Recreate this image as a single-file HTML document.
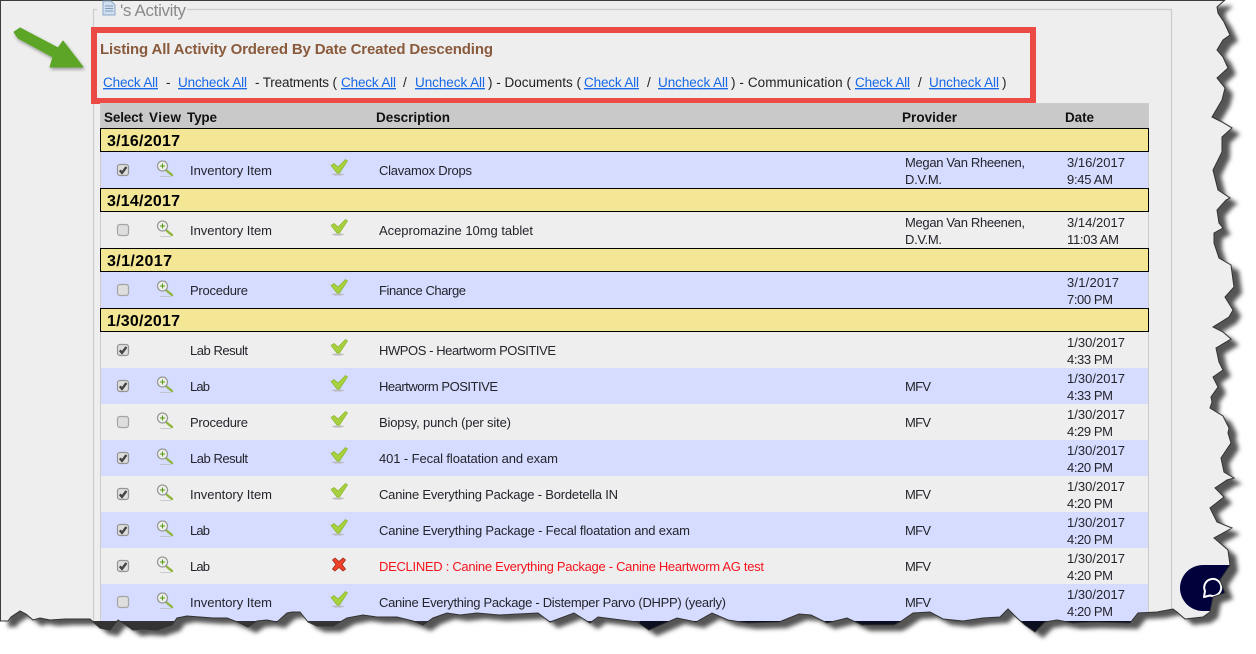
<!DOCTYPE html>
<html><head><meta charset="utf-8"><title>Activity</title>
<style>
html,body{margin:0;padding:0;background:#fff;width:1256px;height:654px;overflow:hidden}
svg{display:block;font-family:"Liberation Sans",sans-serif}
.t{font-size:13px;fill:#24242c}
.h{font-size:13.5px;font-weight:bold;fill:#111}
.d{font-size:16px;font-weight:bold;fill:#000}
.l{font-size:13.5px;fill:#1668e8;text-decoration:underline}
.k{font-size:13.5px;fill:#222}
</style></head><body>
<svg width="1256" height="654" viewBox="0 0 1256 654" xmlns="http://www.w3.org/2000/svg">
<defs>
<path id="edge" d="M0 0L1225 0L1217 7L1218 13L1224 22L1230 35L1223 40L1217 50L1223 57L1228 68L1217 78L1225 88L1222 100L1212 117L1222 122L1232 128L1222 137L1222 152L1213 170L1218 190L1230 198L1226 200L1217 210L1219 223L1223 228L1214 233L1214 243L1219 258L1231 265L1233 280L1234 287L1225 297L1233 310L1229 317L1213 327L1223 332L1231 339L1216 348L1219 362L1223 370L1213 377L1218 387L1211 397L1212 402L1210 408L1223 416L1229 428L1228 433L1231 443L1221 458L1224 472L1234 478L1227 480L1215 488L1224 497L1210 508L1217 522L1232 528L1214 538L1228 550L1230 565L1220 580L1225 593L1213 597L1210 612L1203 617L1185 619L1177 612L1173 609L1157 612L1138 613L1130 623L1093 622L1073 623L1057 620L1045 622L1035 632L1025 625L1017 618L1008 609L1000 617L983 618L963 621L943 619L930 612L913 613L900 622L894 625L862 625L847 618L827 623L811 615L799 614L779 622L748 623L728 620L712 613L696 622L677 618L649 630L637 622L598 617L590 623L574 613L550 622L538 613L499 615L477 613L460 615L447 613L433 618L423 625L413 621L397 617L377 617L363 615L347 618L333 626L317 626L308 622L300 612L292 612L287 613L277 622L267 620L257 621L248 627L240 623L227 618L213 618L200 617L187 616L177 618L172 625L157 630L143 629L133 630L123 623L118 620L110 630L100 628L90 619L65 619L50 620L40 618L33 620L26 614L20 611L11 617L8 621L0 621Z"/>
<clipPath id="pg"><use href="#edge"/></clipPath>
<filter id="bl" x="-5%" y="-5%" width="110%" height="110%"><feGaussianBlur stdDeviation="2.2"/></filter>
<filter id="as" x="-30%" y="-30%" width="160%" height="160%"><feDropShadow dx="1" dy="2" stdDeviation="1.5" flood-color="#000" flood-opacity=".35"/></filter>
<g id="cb0"><rect x="117.5" y="12.5" width="11" height="11" rx="2.500" fill="#dedede" stroke="#a5a5a5" stroke-width="1.200"/></g>
<g id="cb1"><rect x="117.5" y="12.5" width="11" height="11" rx="2.500" fill="#dedede" stroke="#959595" stroke-width="1.200"/><path d="M119.8 18.3L122 20.8L126.4 15" fill="none" stroke="#444" stroke-width="2.400"/></g>
<g id="mg"><path d="M160 24.500L171 24.500" stroke="#bbb" stroke-width="1" opacity=".7"/><path d="M166.500 18.500L172 23" stroke="#8fb53c" stroke-width="2.400" stroke-linecap="round"/><circle cx="162.500" cy="14" r="5" fill="#eef0ee" stroke="#999" stroke-width="1.300"/><path d="M160 14H165M162.500 11.500V16.500" stroke="#5a9a10" stroke-width="1.100"/></g>
<g id="ck"><ellipse cx="338" cy="22.500" rx="6" ry="1" fill="#bbb"/><path d="M331 13.500L334 11.500L338 15L345.500 7.500L347.500 9L339.500 21L337 21Z" fill="#a7d13e" stroke="#8cb52e" stroke-width=".7"/></g>
</defs>

<use href="#edge" fill="#555" transform="translate(8 6)" filter="url(#bl)"/>

<g clip-path="url(#pg)">
<rect width="1256" height="654" fill="#eee"/>
<rect y="621" width="1256" height="33" fill="#333"/>
<rect x="640" y="621" width="495" height="33" fill="#0b0f1f"/>
<rect x="0" y="0" width="1256" height="1" fill="#444"/>
<rect x="0" y="0" width="1" height="654" fill="#444"/>

<path d="M97 9.500H93.500V621M187 9.500H1171.500V621" fill="none" stroke="#ccc" stroke-width="1.200"/>
<path d="M103 1H111L115 5V15H103Z" fill="#cfdff0" stroke="#8fa8c4"/><path d="M105 6H113M105 8.500H113M105 11H113" stroke="#7f9cbc"/>
<text x="120" y="16" font-size="17" fill="#8a8a8a" textLength="66">'s Activity</text>

<rect x="94" y="30" width="939" height="71" fill="none" stroke="#ec4b45" stroke-width="6"/>
<path d="M14 32L20 28L58 48L63 41L83 67L50 67L53 57L18 38Z" fill="#5ca525" stroke="#5ca525" stroke-width="1" stroke-linejoin="round" filter="url(#as)"/>

<text x="100" y="54" font-size="15" font-weight="bold" fill="#8a5a3c" textLength="393">Listing All Activity Ordered By Date Created Descending</text>

<text class="l" x="103" y="87" textLength="55">Check All</text>
<text class="k" x="166" y="87">-</text>
<text class="l" x="178" y="87" textLength="69">Uncheck All</text>
<text class="k" x="255" y="87" textLength="82">- Treatments (</text>
<text class="l" x="341" y="87" textLength="55">Check All</text>
<text class="k" x="403" y="87">/</text>
<text class="l" x="415" y="87" textLength="70">Uncheck All</text>
<text class="k" x="488" y="87" textLength="93">) - Documents (</text>
<text class="l" x="584" y="87" textLength="55">Check All</text>
<text class="k" x="647" y="87">/</text>
<text class="l" x="658" y="87" textLength="70">Uncheck All</text>
<text class="k" x="731" y="87" textLength="120">) - Communication (</text>
<text class="l" x="855" y="87" textLength="55">Check All</text>
<text class="k" x="918" y="87">/</text>
<text class="l" x="929" y="87" textLength="70">Uncheck All</text>
<text class="k" x="1002" y="87">)</text>

<rect x="100" y="103" width="1049" height="518" fill="#ccc"/>
<rect x="101" y="104" width="1047" height="24" fill="#c9c9c9"/>
<text class="h" x="104" y="122" textLength="39">Select</text>
<text class="h" x="149" y="122" textLength="32">View</text>
<text class="h" x="187" y="122" textLength="30">Type</text>
<text class="h" x="376" y="122" textLength="74">Description</text>
<text class="h" x="902" y="122" textLength="55">Provider</text>
<text class="h" x="1065" y="122" textLength="29">Date</text>

<g fill="#f3e796" stroke="#000">
<rect x="100.500" y="128.500" width="1048" height="23"/>
<rect x="100.500" y="188.500" width="1048" height="23"/>
<rect x="100.500" y="248.500" width="1048" height="23"/>
<rect x="100.500" y="308.500" width="1048" height="23"/>
</g>
<text class="d" x="107" y="146" textLength="73">3/16/2017</text>
<text class="d" x="107" y="206" textLength="73">3/14/2017</text>
<text class="d" x="107" y="266" textLength="65">3/1/2017</text>
<text class="d" x="107" y="326" textLength="73">1/30/2017</text>

<g>
<rect x="101" y="152" width="1047" height="36" fill="#d5dcff"/>
<rect x="101" y="212" width="1047" height="36" fill="#eee"/>
<rect x="101" y="272" width="1047" height="36" fill="#d5dcff"/>
<rect x="101" y="332" width="1047" height="36" fill="#eee"/>
<rect x="101" y="368" width="1047" height="36" fill="#d5dcff"/>
<rect x="101" y="404" width="1047" height="36" fill="#eee"/>
<rect x="101" y="440" width="1047" height="36" fill="#d5dcff"/>
<rect x="101" y="476" width="1047" height="36" fill="#eee"/>
<rect x="101" y="512" width="1047" height="36" fill="#d5dcff"/>
<rect x="101" y="548" width="1047" height="36" fill="#eee"/>
<rect x="101" y="584" width="1047" height="37" fill="#d5dcff"/>
</g>

<!-- rows -->
<g transform="translate(0 152)"><use href="#cb1"/><use href="#mg"/><use href="#ck"/>
<text class="t" x="190" y="23" textLength="82">Inventory Item</text><text class="t" x="379" y="23" textLength="93">Clavamox Drops</text>
<text class="t" x="905" y="15" textLength="120">Megan Van Rheenen,</text><text class="t" x="905" y="32" textLength="37">D.V.M.</text>
<text class="t" x="1067" y="15" textLength="58">3/16/2017</text><text class="t" x="1067" y="32" textLength="46">9:45 AM</text></g>

<g transform="translate(0 212)"><use href="#cb0"/><use href="#mg"/><use href="#ck"/>
<text class="t" x="190" y="23" textLength="82">Inventory Item</text><text class="t" x="379" y="23" textLength="154">Acepromazine 10mg tablet</text>
<text class="t" x="905" y="15" textLength="120">Megan Van Rheenen,</text><text class="t" x="905" y="32" textLength="37">D.V.M.</text>
<text class="t" x="1067" y="15" textLength="58">3/14/2017</text><text class="t" x="1067" y="32" textLength="52">11:03 AM</text></g>

<g transform="translate(0 272)"><use href="#cb0"/><use href="#mg"/><use href="#ck"/>
<text class="t" x="190" y="23" textLength="58">Procedure</text><text class="t" x="379" y="23" textLength="87">Finance Charge</text>
<text class="t" x="1067" y="15" textLength="52">3/1/2017</text><text class="t" x="1067" y="32" textLength="46">7:00 PM</text></g>

<g transform="translate(0 332)"><use href="#cb1"/><use href="#ck"/>
<text class="t" x="190" y="23" textLength="58">Lab Result</text><text class="t" x="379" y="23" textLength="177">HWPOS - Heartworm POSITIVE</text>
<text class="t" x="1067" y="15" textLength="58">1/30/2017</text><text class="t" x="1067" y="32" textLength="46">4:33 PM</text></g>

<g transform="translate(0 368)"><use href="#cb1"/><use href="#mg"/><use href="#ck"/>
<text class="t" x="190" y="23" textLength="20">Lab</text><text class="t" x="379" y="23" textLength="119">Heartworm POSITIVE</text><text class="t" x="905" y="23" textLength="26">MFV</text>
<text class="t" x="1067" y="15" textLength="58">1/30/2017</text><text class="t" x="1067" y="32" textLength="46">4:33 PM</text></g>

<g transform="translate(0 404)"><use href="#cb0"/><use href="#mg"/><use href="#ck"/>
<text class="t" x="190" y="23" textLength="58">Procedure</text><text class="t" x="379" y="23" textLength="132">Biopsy, punch (per site)</text><text class="t" x="905" y="23" textLength="26">MFV</text>
<text class="t" x="1067" y="15" textLength="58">1/30/2017</text><text class="t" x="1067" y="32" textLength="46">4:29 PM</text></g>

<g transform="translate(0 440)"><use href="#cb1"/><use href="#mg"/><use href="#ck"/>
<text class="t" x="190" y="23" textLength="58">Lab Result</text><text class="t" x="379" y="23" textLength="179">401 - Fecal floatation and exam</text>
<text class="t" x="1067" y="15" textLength="58">1/30/2017</text><text class="t" x="1067" y="32" textLength="46">4:20 PM</text></g>

<g transform="translate(0 476)"><use href="#cb1"/><use href="#mg"/><use href="#ck"/>
<text class="t" x="190" y="23" textLength="82">Inventory Item</text><text class="t" x="379" y="23" textLength="239">Canine Everything Package - Bordetella IN</text><text class="t" x="905" y="23" textLength="26">MFV</text>
<text class="t" x="1067" y="15" textLength="58">1/30/2017</text><text class="t" x="1067" y="32" textLength="46">4:20 PM</text></g>

<g transform="translate(0 512)"><use href="#cb1"/><use href="#mg"/><use href="#ck"/>
<text class="t" x="190" y="23" textLength="20">Lab</text><text class="t" x="379" y="23" textLength="311">Canine Everything Package - Fecal floatation and exam</text><text class="t" x="905" y="23" textLength="26">MFV</text>
<text class="t" x="1067" y="15" textLength="58">1/30/2017</text><text class="t" x="1067" y="32" textLength="46">4:20 PM</text></g>

<g transform="translate(0 548)"><use href="#cb1"/><use href="#mg"/>
<path d="M332.500 12L335 10L339 13.500L343 10L345.500 12L342 16.500L345.500 21L343 23L339 19.500L335 23L332.500 21L336 16.500Z" fill="#f0432a" stroke="#9c2a14" stroke-width=".8"/>
<text class="t" style="fill:#f5141e" x="379" y="23" textLength="385">DECLINED : Canine Everything Package - Canine Heartworm AG test</text>
<text class="t" x="190" y="23" textLength="20">Lab</text><text class="t" x="905" y="23" textLength="26">MFV</text>
<text class="t" x="1067" y="15" textLength="58">1/30/2017</text><text class="t" x="1067" y="32" textLength="46">4:20 PM</text></g>

<g transform="translate(0 584)"><use href="#cb0"/><use href="#mg"/><use href="#ck"/>
<text class="t" x="190" y="23" textLength="82">Inventory Item</text><text class="t" x="379" y="23" textLength="347">Canine Everything Package - Distemper Parvo (DHPP) (yearly)</text><text class="t" x="905" y="23" textLength="26">MFV</text>
<text class="t" x="1067" y="15" textLength="58">1/30/2017</text><text class="t" x="1067" y="32" textLength="46">4:20 PM</text></g>

<rect x="1180" y="565" width="80" height="46" rx="23" fill="#01013c"/>
<path d="M1204 597L1205 591A8.500 8.500 0 1 1 1210 595.500Z" fill="none" stroke="#fff" stroke-width="2" stroke-linejoin="round"/>
</g>

<use href="#edge" fill="none" stroke="#333" stroke-width="1"/>
</svg>
</body></html>
